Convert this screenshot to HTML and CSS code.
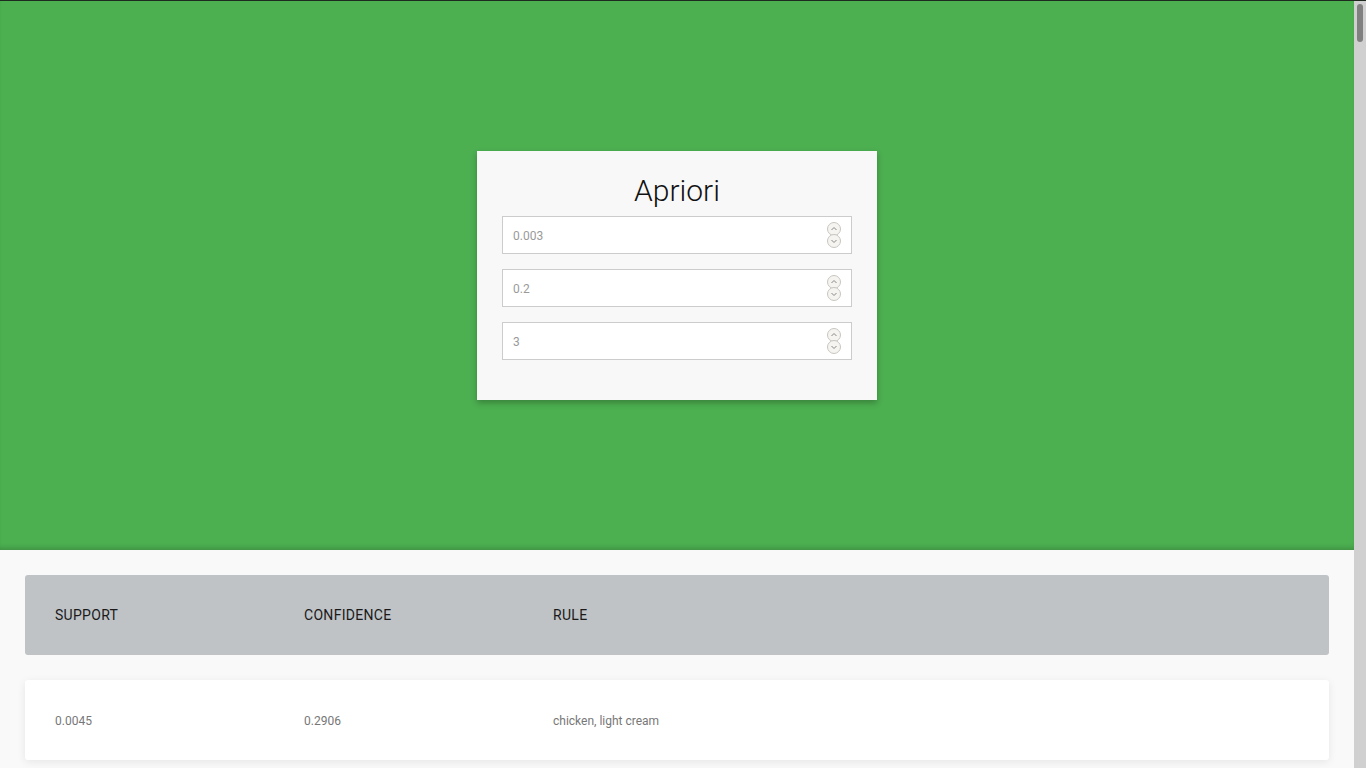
FILE: index.html
```html
<!DOCTYPE html>
<html>
<head>
<meta charset="utf-8">
<title>Apriori</title>
<link rel="stylesheet" href="styles.css">
</head>
<body>
<div class="page">
  <section class="hero">
    <form class="card">
      <h1 class="title">Apriori</h1>
      <label class="field">
        <input class="field-input" type="text" inputmode="decimal" placeholder="0.003">
        <svg class="spin" width="14" height="26" viewBox="0 0 14 26" aria-hidden="true">
          <rect x="0.5" y="0.5" width="13" height="13" rx="6.5" fill="#f6f4f0" stroke="#c8c5c0"/>
          <rect x="0.5" y="12.5" width="13" height="13" rx="6.5" fill="#f6f4f0" stroke="#c8c5c0"/>
          <path d="M4.5 8 L7 5.5 L9.5 8" fill="none" stroke="#888" stroke-width="1"/>
          <path d="M4.5 18 L7 20.5 L9.5 18" fill="none" stroke="#888" stroke-width="1"/>
        </svg>
      </label>
      <label class="field">
        <input class="field-input" type="text" inputmode="decimal" placeholder="0.2">
        <svg class="spin" width="14" height="26" viewBox="0 0 14 26" aria-hidden="true">
          <rect x="0.5" y="0.5" width="13" height="13" rx="6.5" fill="#f6f4f0" stroke="#c8c5c0"/>
          <rect x="0.5" y="12.5" width="13" height="13" rx="6.5" fill="#f6f4f0" stroke="#c8c5c0"/>
          <path d="M4.5 8 L7 5.5 L9.5 8" fill="none" stroke="#888" stroke-width="1"/>
          <path d="M4.5 18 L7 20.5 L9.5 18" fill="none" stroke="#888" stroke-width="1"/>
        </svg>
      </label>
      <label class="field">
        <input class="field-input" type="text" inputmode="numeric" placeholder="3">
        <svg class="spin" width="14" height="26" viewBox="0 0 14 26" aria-hidden="true">
          <rect x="0.5" y="0.5" width="13" height="13" rx="6.5" fill="#f6f4f0" stroke="#c8c5c0"/>
          <rect x="0.5" y="12.5" width="13" height="13" rx="6.5" fill="#f6f4f0" stroke="#c8c5c0"/>
          <path d="M4.5 8 L7 5.5 L9.5 8" fill="none" stroke="#888" stroke-width="1"/>
          <path d="M4.5 18 L7 20.5 L9.5 18" fill="none" stroke="#888" stroke-width="1"/>
        </svg>
      </label>
    </form>
  </section>
  <main class="results">
    <div class="row head">
      <div class="cell">SUPPORT</div>
      <div class="cell">CONFIDENCE</div>
      <div class="cell">RULE</div>
    </div>
    <div class="row item">
      <div class="cell">0.0045</div>
      <div class="cell">0.2906</div>
      <div class="cell">chicken, light cream</div>
    </div>
  </main>
</div>
<div class="scrollbar"><div class="thumb"></div></div>
</body>
</html>
```
FILE: styles.css
```css
html, body {
  margin: 0;
  padding: 0;
}
body {
  height: 768px;
  box-sizing: border-box;
  overflow: hidden;
  display: flex;
  background: #f9f9f9;
  font-family: Roboto, "Liberation Sans", sans-serif;
  border-top: 1px solid #1e2a1e;
}
.page {
  flex: 1;
  min-width: 0;
  overflow: hidden;
}
.scrollbar {
  width: 12px;
  flex: none;
  background: #d0d0d0;
  padding: 3px 3px 0;
  box-sizing: border-box;
}
.thumb {
  width: 6px;
  height: 38px;
  border-radius: 3px;
  background: #808080;
}
.hero {
  height: 549px;
  background: #4caf50;
  display: flex;
  align-items: center;
  justify-content: center;
  box-shadow: inset 0 -5px 5px -3px rgba(0,0,0,0.18);
}
.card {
  width: 400px;
  box-sizing: border-box;
  background: #f8f8f8;
  padding: 22px 25px 40px;
  display: flex;
  flex-direction: column;
  gap: 15px;
  box-shadow: 0 3px 6px rgba(0,0,0,0.25);
}
.title {
  margin: 0 0 -8px;
  text-align: center;
  font-weight: 300;
  font-size: 30px;
  line-height: 36px;
  color: #111;
}
.field {
  height: 38px;
  box-sizing: border-box;
  border: 1px solid #ccc;
  background: #fff;
  display: flex;
  align-items: center;
  padding: 0 10px 0 10px;
  gap: 8px;
}
.field-input {
  flex: 1;
  min-width: 0;
  border: 0;
  padding: 0;
  margin: 0;
  background: transparent;
  font-family: Roboto, "Liberation Sans", sans-serif;
  font-size: 12px;
  color: #888;
  outline: none;
  position: relative;
  top: 1px;
}
.field-input::placeholder {
  color: #9a9a9a;
}
.spin {
  flex: none;
  display: block;
}
.results {
  padding: 25px 25px 40px;
  display: flex;
  flex-direction: column;
  gap: 25px;
}
.row {
  display: grid;
  grid-template-columns: 249px 249px 1fr;
  align-items: center;
  height: 80px;
  padding: 0 30px;
  border-radius: 3px;
}
.head {
  background: #bfc3c6;
  font-size: 14px;
  letter-spacing: 0.3px;
  color: #1a1a1a;
}
.item {
  background: #fff;
  font-size: 12px;
  color: #777;
  box-shadow: 0 2px 8px rgba(0,0,0,0.08);
}
.item .cell {
  position: relative;
  top: 1px;
}
```
